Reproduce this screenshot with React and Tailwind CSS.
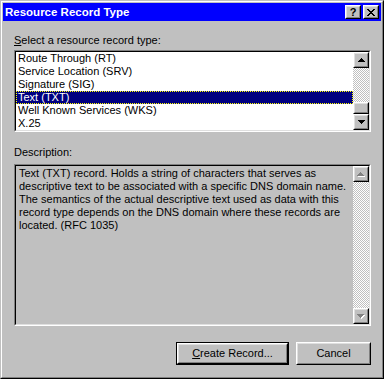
const items = [
  "Route Through (RT)",
  "Service Location (SRV)",
  "Signature (SIG)",
  "Text (TXT)",
  "Well Known Services (WKS)",
  "X.25",
];

const descLines = [
  "Text (TXT) record. Holds a string of characters that serves as",
  "descriptive text to be associated with a specific DNS domain name.",
  "The semantics of the actual descriptive text used as data with this",
  "record type depends on the DNS domain where these records are",
  "located. (RFC 1035)",
];

function Raised({ className = "", children }) {
  return (
    <div className={`bg-[#c0c0c0] border border-t-white border-l-white border-b-black border-r-black ${className}`}>
      <div className="h-full w-full border border-t-[#dfdfdf] border-l-[#dfdfdf] border-b-[#808080] border-r-[#808080] flex items-center justify-center">
        {children}
      </div>
    </div>
  );
}

function Arrow({ down = false, color = "#000" }) {
  const rows = [
    [3, 1],
    [2, 3],
    [1, 5],
    [0, 7],
  ];
  const r = down ? [...rows].reverse() : rows;
  return (
    <svg width="7" height="4" viewBox="0 0 7 4" shapeRendering="crispEdges">
      {r.map(([x, w], i) => (
        <rect key={i} x={x} y={i} width={w} height="1" fill={color} />
      ))}
    </svg>
  );
}

function GrayArrow({ down = false }) {
  return (
    <div className="relative w-[8px] h-[5px]">
      <div className="absolute left-[1px] top-[1px] flex">
        <Arrow down={down} color="#ffffff" />
      </div>
      <div className="absolute left-0 top-0 flex">
        <Arrow down={down} color="#808080" />
      </div>
    </div>
  );
}

function CloseGlyph() {
  const rows = [
    [[0, 2], [6, 2]],
    [[1, 2], [5, 2]],
    [[2, 4]],
    [[3, 2]],
    [[2, 4]],
    [[1, 2], [5, 2]],
    [[0, 2], [6, 2]],
  ];
  return (
    <svg width="8" height="7" viewBox="0 0 8 7" shapeRendering="crispEdges">
      {rows.map((segs, y) =>
        segs.map(([x, w], j) => <rect key={`${y}-${j}`} x={x} y={y} width={w} height="1" fill="#000" />)
      )}
    </svg>
  );
}

const checker =
  "bg-[repeating-conic-gradient(#c0c0c0_0_25%,#ffffff_0_50%)] bg-[length:2px_2px]";

function Sunken({ className = "", innerClass = "", children }) {
  return (
    <div className={`border border-t-[#808080] border-l-[#808080] border-b-white border-r-white ${className}`}>
      <div className={`h-full w-full border border-t-black border-l-black border-b-[#dfdfdf] border-r-[#dfdfdf] flex ${innerClass}`}>
        {children}
      </div>
    </div>
  );
}

export default function App() {
  return (
    <div className="w-[384px] h-[379px] bg-[#c0c0c0] border border-t-[#c0c0c0] border-l-[#c0c0c0] border-r-black border-b-black font-['Liberation_Sans',Arial,sans-serif] text-[11px] text-black select-none">
      <div className="h-full border border-t-white border-l-white border-r-[#808080] border-b-[#808080] p-px flex flex-col">
        {/* title bar */}
        <div className="h-[18px] bg-[#0000ff] flex items-center pl-[2px] pr-[2px]">
          <span className="text-white font-bold text-[11.5px] leading-[18px] flex-1">Resource Record Type</span>
          <div className="flex gap-[2px]">
            <Raised className="w-[16px] h-[14px]">
              <span className="font-bold text-[11px] leading-none">?</span>
            </Raised>
            <Raised className="w-[16px] h-[14px]">
              <CloseGlyph />
            </Raised>
          </div>
        </div>

        <div className="flex flex-col pl-[11px] pr-[10px]">
          <div className="mt-[13px] h-[13px] leading-[13px]">
            <span className="underline">S</span>elect a resource record type:
          </div>

          <Sunken className="mt-[3px] h-[82px]" innerClass="bg-white">
            <div className="flex-1 flex flex-col">
              {items.map((it) =>
                it === "Text (TXT)" ? (
                  <div
                    key={it}
                    className="h-[13px] leading-[11px] pl-px bg-[#000080] text-white border border-dotted border-[#ffff00]"
                  >
                    {it}
                  </div>
                ) : (
                  <div key={it} className="h-[13px] leading-[13px] pl-[2px]">
                    {it}
                  </div>
                )
              )}
            </div>
            <div className="w-[16px] flex flex-col">
              <Raised className="h-[16px]">
                <Arrow />
              </Raised>
              <div className={`flex-1 flex flex-col justify-end ${checker}`}>
                <Raised className="h-[12px]" />
              </div>
              <Raised className="h-[16px]">
                <Arrow down />
              </Raised>
            </div>
          </Sunken>

          <div className="mt-[14px] h-[13px] leading-[13px]">Description:</div>

          <Sunken className="mt-[5px] h-[162px]">
            <div className="flex-1 pl-[3px] pt-px">
              {descLines.map((l, i) => (
                <div key={i} className="h-[13px] leading-[13px] whitespace-nowrap">
                  {l}
                </div>
              ))}
            </div>
            <div className="w-[16px] flex flex-col">
              <Raised className="h-[16px]">
                <GrayArrow />
              </Raised>
              <div className={`flex-1 ${checker}`} />
              <Raised className="h-[16px]">
                <GrayArrow down />
              </Raised>
            </div>
          </Sunken>

          <div className="mt-[16px] flex justify-end gap-[7px]">
            <div className="w-[113px] h-[23px] border border-black">
              <Raised className="h-full">
                <span>
                  <span className="underline">C</span>reate Record...
                </span>
              </Raised>
            </div>
            <Raised className="w-[75px] h-[23px]">
              <span>Cancel</span>
            </Raised>
          </div>
        </div>
      </div>
    </div>
  );
}
